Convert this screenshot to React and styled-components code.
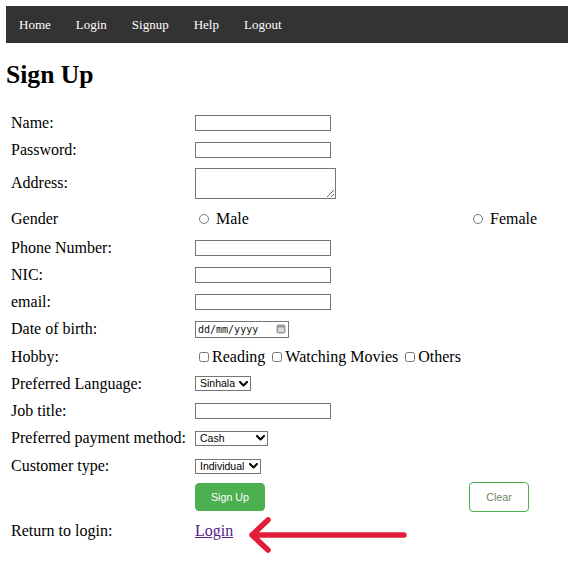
import React from "react";
import styled, { createGlobalStyle } from "styled-components";

const Global = createGlobalStyle`
  html, body { margin: 0; padding: 0; background: #fff; }
  body { font-family: "Liberation Serif", "Times New Roman", serif; color: #000; }
  * { box-sizing: border-box; }
`;

const Page = styled.div`
  width: 568px;
  min-height: 562px;
  padding-top: 6px;
`;

const NavBar = styled.nav`
  margin-left: 6px;
  height: 37px;
  background: #333;
  display: flex;
  align-items: center;
  gap: 25px;
  padding-left: 13px;
`;

const NavLink = styled.a`
  color: #fff;
  text-decoration: none;
  font-family: "Liberation Serif", serif;
  font-size: 13px;
  line-height: 16px;
`;

const Title = styled.h1`
  margin: 17px 0 20px 6px;
  font-size: 25.6px;
  line-height: 29px;
  font-weight: bold;
`;

const Form = styled.form`
  display: flex;
  flex-direction: column;
  padding-left: 11px;
`;

const Row = styled.div`
  display: grid;
  grid-template-columns: 184px 274px 1fr;
  align-items: center;
  height: ${(p) => p.$h || 27}px;
  position: relative;
`;

const Label = styled.div`
  font-size: 16px;
  line-height: 18px;
  white-space: nowrap;
`;

const Cell = styled.div`
  display: flex;
  align-items: center;
  grid-column: ${(p) => p.$span || "auto"};
  position: relative;
  font-size: 16px;
  white-space: nowrap;
`;

const TextInput = styled.input`
  width: ${(p) => p.$w || 136}px;
  height: 16px;
  border: 1px solid #767676;
  border-radius: 0;
  padding: 0 2px;
  font-size: 11px;
  margin: 0;
  outline: none;
`;

const TextArea = styled.textarea`
  width: 141px;
  height: 31px;
  border: 1px solid #767676;
  border-radius: 0;
  padding: 1px 2px;
  margin: 0;
  font-size: 11px;
  display: block;
`;

const Radio = styled.input.attrs({ type: "radio" })`
  width: 10px;
  height: 10px;
  margin: 0 7px 0 ${(p) => p.$ml || 4}px;
`;

const Check = styled.input.attrs({ type: "checkbox" })`
  width: 10px;
  height: 10px;
  margin: 0 3px 0 4px;
`;

const OptionText = styled.span`
  font-size: 16px;
  line-height: 18px;
  margin-right: ${(p) => p.$mr || 3}px;
`;

const DateBox = styled.div`
  width: 94px;
  height: 17px;
  border: 1px solid #767676;
  display: flex;
  align-items: center;
  justify-content: space-between;
  padding: 0 2px 0 2px;
  font-family: "DejaVu Sans Mono", "Liberation Mono", monospace;
  font-size: 10px;
  color: #111;
`;

const CalIcon = styled.svg`
  width: 10px;
  height: 10px;
  display: block;
`;

const SelectWrap = styled.div`
  position: relative;
  width: ${(p) => p.$w}px;
  height: 15px;
`;

const Select = styled.select`
  appearance: none;
  -webkit-appearance: none;
  display: block;
  width: 100%;
  height: 100%;
  border: 1px solid #767676;
  border-radius: 0;
  padding: 0 14px 0 4px;
  margin: 0;
  font-family: "Liberation Sans", Arial, sans-serif;
  font-size: 10.5px;
  line-height: 13px;
  background: #fff;
  color: #000;
  outline: none;
`;

const Chevron = styled.svg`
  position: absolute;
  right: 3px;
  top: 4.5px;
  width: 9px;
  height: 6px;
  pointer-events: none;
`;

const Button = styled.button`
  height: ${(p) => (p.$primary ? 28 : 30)}px;
  width: ${(p) => (p.$primary ? 70 : 60)}px;
  border-radius: 4px;
  border: 1px solid #4caf50;
  background: ${(p) => (p.$primary ? "#4caf50" : "#fff")};
  color: ${(p) => (p.$primary ? "#fff" : "#6b8a62")};
  font-family: "Liberation Sans", Arial, sans-serif;
  font-size: 10.7px;
  padding: 0;
  cursor: pointer;
`;

const LoginLink = styled.a`
  font-size: 16px;
  line-height: 18px;
  color: #551a8b;
  text-decoration: underline;
`;

const Arrow = styled.svg`
  position: absolute;
  left: 50px;
  top: -7px;
  width: 165px;
  height: 40px;
  overflow: visible;
`;

function Dropdown({ w, options }) {
  return (
    <SelectWrap $w={w}>
      <Select>
        {options.map((o) => (
          <option key={o}>{o}</option>
        ))}
      </Select>
      <Chevron viewBox="0 0 9 6">
        <path d="M1 1 L4.5 4.5 L8 1" fill="none" stroke="#000" strokeWidth="2" strokeLinecap="round" strokeLinejoin="round" />
      </Chevron>
    </SelectWrap>
  );
}

export default function App() {
  return (
    <>
      <Global />
      <Page>
        <NavBar>
          <NavLink href="#">Home</NavLink>
          <NavLink href="#">Login</NavLink>
          <NavLink href="#">Signup</NavLink>
          <NavLink href="#">Help</NavLink>
          <NavLink href="#">Logout</NavLink>
        </NavBar>
        <Title>Sign Up</Title>
        <Form onSubmit={(e) => e.preventDefault()}>
          <Row>
            <Label>Name:</Label>
            <Cell><TextInput type="text" /></Cell>
          </Row>
          <Row>
            <Label>Password:</Label>
            <Cell><TextInput type="password" /></Cell>
          </Row>
          <Row $h={40}>
            <Label>Address:</Label>
            <Cell><TextArea /></Cell>
          </Row>
          <Row $h={31}>
            <Label>Gender</Label>
            <Cell>
              <Radio name="g" $ml={4} />
              <OptionText>Male</OptionText>
            </Cell>
            <Cell>
              <Radio name="g" $ml={4} />
              <OptionText>Female</OptionText>
            </Cell>
          </Row>
          <Row>
            <Label>Phone Number:</Label>
            <Cell><TextInput type="text" /></Cell>
          </Row>
          <Row>
            <Label>NIC:</Label>
            <Cell><TextInput type="text" /></Cell>
          </Row>
          <Row>
            <Label>email:</Label>
            <Cell><TextInput type="email" /></Cell>
          </Row>
          <Row $h={28}>
            <Label>Date of birth:</Label>
            <Cell>
              <DateBox>
                <span>dd/mm/yyyy</span>
                <CalIcon viewBox="0 0 10 10">
                  <rect x="0.5" y="0.5" width="9" height="9" rx="2" fill="#9a9a9a" />
                  <rect x="2" y="3.5" width="6" height="4.5" rx="0.8" fill="#d8d8d8" />
                </CalIcon>
              </DateBox>
            </Cell>
          </Row>
          <Row>
            <Label>Hobby:</Label>
            <Cell $span="2 / 4">
              <Check />
              <OptionText>Reading</OptionText>
              <Check />
              <OptionText>Watching Movies</OptionText>
              <Check />
              <OptionText>Others</OptionText>
            </Cell>
          </Row>
          <Row>
            <Label>Preferred Language:</Label>
            <Cell>
              <Dropdown w={56} options={["Sinhala", "Tamil", "English"]} />
            </Cell>
          </Row>
          <Row>
            <Label>Job title:</Label>
            <Cell><TextInput type="text" /></Cell>
          </Row>
          <Row $h={28}>
            <Label>Preferred payment method:</Label>
            <Cell>
              <Dropdown w={73} options={["Cash", "Credit Card"]} />
            </Cell>
          </Row>
          <Row $h={28}>
            <Label>Customer type:</Label>
            <Cell>
              <Dropdown w={66} options={["Individual", "Business"]} />
            </Cell>
          </Row>
          <Row $h={34}>
            <Label />
            <Cell><Button $primary type="submit">Sign Up</Button></Cell>
            <Cell><Button type="reset">Clear</Button></Cell>
          </Row>
          <Row $h={33}>
            <Label>Return to login:</Label>
            <Cell>
              <LoginLink href="#">Login</LoginLink>
              <Arrow viewBox="0 0 165 40">
                <path
                  d="M159 20 L7 20 M23 5 L7 20 L23 35"
                  fill="none"
                  stroke="#e11d38"
                  strokeWidth="5.5"
                  strokeLinecap="round"
                  strokeLinejoin="round"
                />
              </Arrow>
            </Cell>
          </Row>
        </Form>
      </Page>
    </>
  );
}
